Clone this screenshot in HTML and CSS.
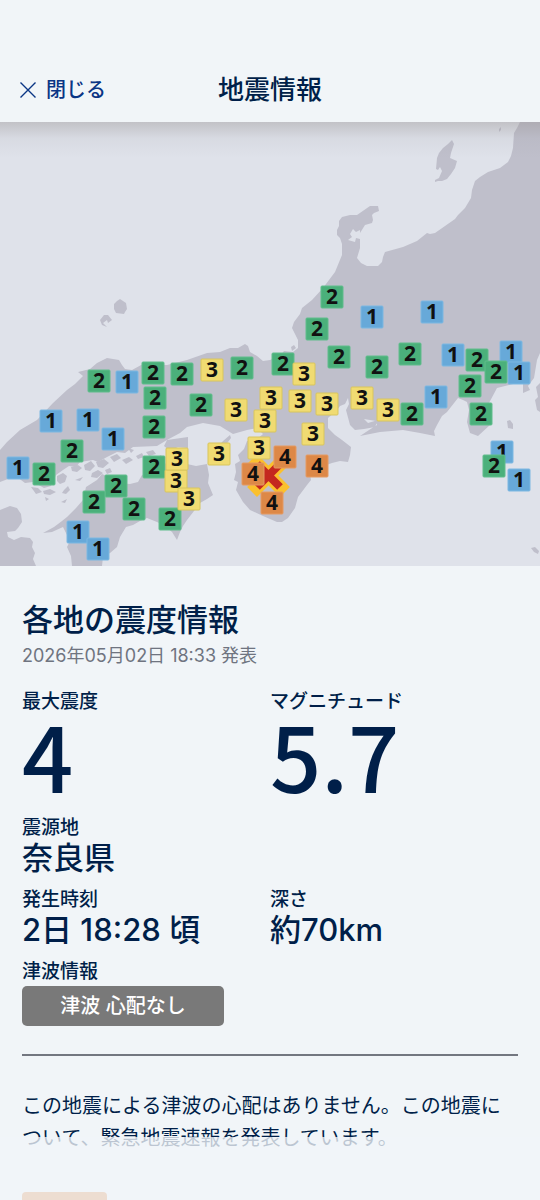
FILE: index.html
```html
<!DOCTYPE html>
<html lang="ja">
<head>
  <meta charset="UTF-8">
  <meta name="viewport" content="width=device-width, initial-scale=1">
  <title>地震情報</title>
  <link rel="stylesheet" href="styles.css">
</head>
<body>
  <div class="app">

    <header class="header">
      <button class="close" type="button">
        <svg class="close-icon" viewBox="0 0 16 16" aria-hidden="true"><path d="M0.5 0.5L15.5 15.5M15.5 0.5L0.5 15.5"/></svg>
        閉じる
      </button>
      <h1>地震情報</h1>
    </header>

    <main>
      <div class="map">
        <svg viewBox="0 122 540 444" role="img" aria-label="震度分布図">
          <!-- 陸地 -->
          <g class="land">
            <path d="M520 122L517 128L514 133L513 148L511 156L508 162L500 168L488 172L480 177L475 181L472 190L471 198L465 208L458 215L455 219L445 226L435 233L430 234L427 233L417 241L403 247L385 252L383 257L382 262L378 266L367 266L361 263L357 258L360 248L360 233L365 225L372 223L373 220L372 215L374 213L379 211L378 206L370 206L357 215L350 215L342 217L339 221L339 226L337 230L337 235L340 238L342 244L342 255L335 272L323 288L312 300L302 308L300 314L294 322L292 328L295 334L298 340L298 348L293 352L284 351L280 356L270 360L263 361L257 356L250 352L248 346L245 344L238 348L230 348L220 352L207 353L187 360L167 365L143 364L132 370L125 369L122 365L119 360L107 358L97 363L90 369L78 372L83 376L75 384L67 390L53 403L37 420L20 430L7 442L0 450L0 482L8 479L17 477L25 483L33 482L44 488L51 486L56 475L63 470L69 466L76 467L80 462L93 460L98 462L107 457L117 452L125 453L133 447L157 446L167 440L180 433L187 427L203 423L220 426L233 434L247 430L257 428L263 434L256 440L247 441L244 449L238 455L240 461L235 464L236 472L234 480L238 482L236 490L243 502L250 510L263 516L277 522L282 522L288 518L295 508L298 497L307 485L311 480L310 474L318 468L332 463L340 461L348 462L350 455L351 447L342 440L335 435L328 428L328 418L337 410L340 406L345 404L348 398L349 404L346 410L350 425L355 430L364 429L375 427L378 420L368 423L364 419L376 421L377 425L369 430L360 436L380 432L403 430L420 433L435 436L434 431L437 425L442 416L447 412L458 398L463 400L467 402L469 410L467 422L470 433L478 436L490 425L491 412L489 403L497 388L513 384L523 384L523 393L530 390L528 386L534 378L537 360L540 353L540 122Z"/>
            <path d="M163 462L168 465L187 464L196 466L207 464L209 475L208 483L213 495L207 499L200 503L194 511L187 520L183 526L180 532L177 540L172 532L165 526L157 522L147 518L140 521L133 525L126 527L120 537L117 547L110 553L103 557L102 566L72 566L71 556L67 547L70 541L63 527L52 532L43 533L54 527L62 521L67 517L76 508L83 500L86 487L97 480L102 474L109 477L117 483L130 484L138 482L142 475L151 472Z"/>
            <path d="M0 510L10 506L17 508L21 514L22 522L18 528L15 531L7 532L8 537L14 540L21 537L30 538L33 542L32 547L35 553L33 559L36 566L0 566Z"/>
            <path d="M452 140L454 144L451 153L450 158L457 161L455 168L451 174L447 179L442 181L438 181L435 182L435 180L439 178L442 171L440 167L438 170L436 169L437 158L439 153L443 148L448 144Z"/>
            <path d="M120 299L123 301L126 303L127 309L125 312L124 314L116 313L114 309L114 304L117 301Z"/>
            <path d="M100 320L104 315L108 315L112 320L108 323L107 320L103 323L107 327L102 325Z"/>
            <path d="M230 435L231 438L225 446L223 456L215 464L209 462L216 449L223 441Z"/>
            <path d="M167 440L188 437L188 448L178 447L170 451L164 446Z"/>
            <path d="M507 421L510 420L513 424L513 429L508 428Z"/>
            <path d="M540 383L536 387L538 397L535 400L537 410L540 412Z"/>
            <path d="M531 548L535 547L539 551L538 554L534 552Z"/>
            <path d="M499 129L501 127L501 130L499 132Z"/>
            <path d="M291 347L294 345L296 348L292 351Z"/>
            <!-- 瀬戸内の島 -->
            <path d="M57 476L63 473L67 476L65 482L60 484L57 481ZM71 467L78 465L82 468L77 472L72 471ZM84 465L91 461L95 466L90 471L85 470ZM96 462L104 459L109 463L103 468L98 467ZM92 473L98 470L103 473L97 478L91 477ZM110 457L117 454L121 458L114 462ZM122 460L129 457L133 460L126 464ZM136 456L142 453L144 457L138 459ZM146 452L153 450L156 454L149 456ZM156 458L161 455L163 459L158 461ZM128 448L134 450L131 453ZM105 470L110 468L112 472L107 474ZM43 491L50 489L56 492L50 495L44 494ZM64 490L68 486L70 490L66 494L62 493ZM31 487L38 488L42 492L36 494ZM61 502L67 499L65 503ZM75 480L83 477L80 481ZM45 497L49 499L46 501Z"/>
          </g>
          <!-- 七尾湾 -->
          <path class="sea" d="M350 234L353 229L356 232L360 230L360 239L356 238L355 242L348 240L352 237Z"/>

          <!-- 震源 -->
          <g class="epicenter">
            <path class="cross-edge" d="M257 464L280 487M280 464L257 487"/>
            <path class="cross" d="M257 464L280 487M280 464L257 487"/>
          </g>

          <!-- 各地の震度 -->
          <g class="mark i1" transform="translate(372 317)"><rect/><text>1</text></g>
          <g class="mark i1" transform="translate(432 312)"><rect/><text>1</text></g>
          <g class="mark i1" transform="translate(127 382)"><rect/><text>1</text></g>
          <g class="mark i1" transform="translate(51 421)"><rect/><text>1</text></g>
          <g class="mark i1" transform="translate(88 420)"><rect/><text>1</text></g>
          <g class="mark i1" transform="translate(113 439)"><rect/><text>1</text></g>
          <g class="mark i1" transform="translate(18 468)"><rect/><text>1</text></g>
          <g class="mark i1" transform="translate(78 532)"><rect/><text>1</text></g>
          <g class="mark i1" transform="translate(98 549)"><rect/><text>1</text></g>
          <g class="mark i1" transform="translate(453 355)"><rect/><text>1</text></g>
          <g class="mark i1" transform="translate(511 352)"><rect/><text>1</text></g>
          <g class="mark i1" transform="translate(519 373)"><rect/><text>1</text></g>
          <g class="mark i1" transform="translate(436 397)"><rect/><text>1</text></g>
          <g class="mark i1" transform="translate(502 452)"><rect/><text>1</text></g>
          <g class="mark i1" transform="translate(519 480)"><rect/><text>1</text></g>

          <g class="mark i2" transform="translate(332 297)"><rect/><text>2</text></g>
          <g class="mark i2" transform="translate(317 329)"><rect/><text>2</text></g>
          <g class="mark i2" transform="translate(99 381)"><rect/><text>2</text></g>
          <g class="mark i2" transform="translate(153 373)"><rect/><text>2</text></g>
          <g class="mark i2" transform="translate(182 374)"><rect/><text>2</text></g>
          <g class="mark i2" transform="translate(242 368)"><rect/><text>2</text></g>
          <g class="mark i2" transform="translate(155 398)"><rect/><text>2</text></g>
          <g class="mark i2" transform="translate(201 405)"><rect/><text>2</text></g>
          <g class="mark i2" transform="translate(154 427)"><rect/><text>2</text></g>
          <g class="mark i2" transform="translate(72 451)"><rect/><text>2</text></g>
          <g class="mark i2" transform="translate(44 474)"><rect/><text>2</text></g>
          <g class="mark i2" transform="translate(154 467)"><rect/><text>2</text></g>
          <g class="mark i2" transform="translate(116 486)"><rect/><text>2</text></g>
          <g class="mark i2" transform="translate(94 502)"><rect/><text>2</text></g>
          <g class="mark i2" transform="translate(134 509)"><rect/><text>2</text></g>
          <g class="mark i2" transform="translate(170 519)"><rect/><text>2</text></g>
          <g class="mark i2" transform="translate(283 364)"><rect/><text>2</text></g>
          <g class="mark i2" transform="translate(339 357)"><rect/><text>2</text></g>
          <g class="mark i2" transform="translate(377 367)"><rect/><text>2</text></g>
          <g class="mark i2" transform="translate(410 354)"><rect/><text>2</text></g>
          <g class="mark i2" transform="translate(477 360)"><rect/><text>2</text></g>
          <g class="mark i2" transform="translate(496 372)"><rect/><text>2</text></g>
          <g class="mark i2" transform="translate(470 386)"><rect/><text>2</text></g>
          <g class="mark i2" transform="translate(412 414)"><rect/><text>2</text></g>
          <g class="mark i2" transform="translate(481 414)"><rect/><text>2</text></g>
          <g class="mark i2" transform="translate(494 466)"><rect/><text>2</text></g>

          <g class="mark i3" transform="translate(212 370)"><rect/><text>3</text></g>
          <g class="mark i3" transform="translate(304 374)"><rect/><text>3</text></g>
          <g class="mark i3" transform="translate(236 410)"><rect/><text>3</text></g>
          <g class="mark i3" transform="translate(271 398)"><rect/><text>3</text></g>
          <g class="mark i3" transform="translate(300 401)"><rect/><text>3</text></g>
          <g class="mark i3" transform="translate(327 404)"><rect/><text>3</text></g>
          <g class="mark i3" transform="translate(362 398)"><rect/><text>3</text></g>
          <g class="mark i3" transform="translate(388 410)"><rect/><text>3</text></g>
          <g class="mark i3" transform="translate(265 421)"><rect/><text>3</text></g>
          <g class="mark i3" transform="translate(313 434)"><rect/><text>3</text></g>
          <g class="mark i3" transform="translate(259 448)"><rect/><text>3</text></g>
          <g class="mark i3" transform="translate(219 454)"><rect/><text>3</text></g>
          <g class="mark i3" transform="translate(176 481)"><rect/><text>3</text></g>
          <g class="mark i3" transform="translate(177 459)"><rect/><text>3</text></g>
          <g class="mark i3" transform="translate(189 499)"><rect/><text>3</text></g>

          <g class="mark i4" transform="translate(285 457)"><rect/><text>4</text></g>
          <g class="mark i4" transform="translate(317 466)"><rect/><text>4</text></g>
          <g class="mark i4" transform="translate(253 474)"><rect/><text>4</text></g>
          <g class="mark i4" transform="translate(272 503)"><rect/><text>4</text></g>
        </svg>
      </div>

      <section class="info">
        <h2>各地の震度情報</h2>
        <p class="date">2026年05月02日 18:33 発表</p>

        <dl class="detail">
          <div>
            <dt>最大震度</dt>
            <dd class="big">4</dd>
          </div>
          <div>
            <dt>マグニチュード</dt>
            <dd class="big">5.7</dd>
          </div>
          <div class="wide">
            <dt>震源地</dt>
            <dd>奈良県</dd>
          </div>
          <div>
            <dt>発生時刻</dt>
            <dd>2日 18:28 頃</dd>
          </div>
          <div>
            <dt>深さ</dt>
            <dd>約70km</dd>
          </div>
          <div class="wide">
            <dt>津波情報</dt>
            <dd class="tsunami">津波 心配なし</dd>
          </div>
        </dl>

        <p class="comment">この地震による津波の心配はありません。この地震について、緊急地震速報を発表しています。</p>
        <div class="chip"></div>
      </section>
    </main>

    <div class="bottom-fade"></div>
  </div>
</body>
</html>
```
FILE: styles.css
```css
* {
  box-sizing: border-box;
}

body {
  margin: 0;
  background: #f1f5f8;
  color: #001f49;
  font-family: Inter, "Noto Sans CJK JP", sans-serif;
}

h1, h2, p, dl, dd {
  margin: 0;
}

.app {
  height: 100vh;
  overflow: hidden;
}

/* ヘッダー */
.header {
  display: grid;
  grid-template-columns: 1fr auto 1fr;
  align-items: center;
  padding: 67px 20px 9px;
}

.header h1 {
  font-size: 26px;
  line-height: 46px;
  font-weight: 500;
}

.close {
  display: flex;
  align-items: center;
  gap: 10px;
  padding: 0;
  border: 0;
  background: none;
  color: #0a3585;
  font-family: inherit;
  font-size: 20px;
  font-weight: 500;
  line-height: 30px;
  cursor: pointer;
}

.close-icon {
  width: 16px;
  height: 16px;
  fill: none;
  stroke: #0a3585;
  stroke-width: 1.4;
}

/* 地図 */
.map {
  position: relative;
  background: #dfe2ea;
}

.map::after {
  content: "";
  position: absolute;
  inset: 0 0 auto;
  height: 36px;
  background: linear-gradient(rgba(150, 145, 145, 0.4), rgba(150, 150, 155, 0.1) 45%, rgba(150, 150, 155, 0));
}

.map svg {
  display: block;
  width: 100%;
}

.land {
  fill: #bfbfcb;
}

.sea {
  fill: #dfe2ea;
}

.cross-edge {
  stroke: #fbc02d;
  stroke-width: 14;
  stroke-linecap: square;
}

.cross {
  stroke: #c4281f;
  stroke-width: 8;
}

.mark rect {
  x: -11px;
  y: -11px;
  width: 22px;
  height: 22px;
  rx: 1px;
}

.mark text {
  font-family: "Noto Sans", sans-serif;
  font-size: 21px;
  font-weight: 700;
  text-anchor: middle;
  transform: translateY(7px);
  fill: #111;
}

.i1 rect {
  fill: #67a9d9;
  stroke: #7db8e2;
}

.i2 rect {
  fill: #4bb07b;
  stroke: #61bd8c;
}

.i3 rect {
  fill: #f0db72;
  stroke: #d8c55c;
}

.i4 rect {
  fill: #dd8847;
  stroke: #e59a62;
}

/* 地震の詳細 */
.info {
  padding: 34px 22px 0;
}

.info h2 {
  font-size: 31px;
  line-height: 40px;
  font-weight: 500;
}

.date {
  font-size: 18px;
  line-height: 32px;
  color: #6f7480;
}

.detail {
  display: grid;
  grid-template-columns: 1fr 1fr;
  row-gap: 12px;
  margin-top: 16px;
  padding-bottom: 28px;
  border-bottom: 2px solid #737780;
}

.wide {
  grid-column: 1 / -1;
}

.detail dt {
  font-size: 19px;
  line-height: 28px;
  font-weight: 500;
}

.detail dd {
  font-size: 31px;
  line-height: 32px;
  font-weight: 500;
}

.detail .big {
  padding-bottom: 10px;
  font-family: "Noto Sans CJK JP", sans-serif;
  font-size: 90px;
  line-height: 76px;
}

.detail .tsunami {
  width: 202px;
  border-radius: 5px;
  background: #797979;
  color: #fff;
  font-size: 20px;
  line-height: 40px;
  text-align: center;
}

.comment {
  margin-top: 34px;
  font-size: 20px;
  line-height: 32px;
}

.chip {
  width: 85px;
  height: 40px;
  margin-top: 38px;
  border-radius: 4px;
  background: #dd8847;
}

.bottom-fade {
  position: fixed;
  inset: auto 0 0;
  height: 63px;
  background: rgba(241, 245, 248, 0.78);
}
```
